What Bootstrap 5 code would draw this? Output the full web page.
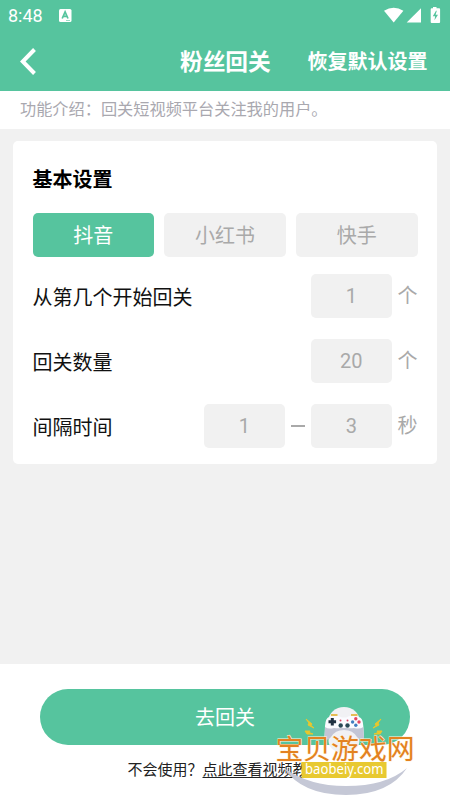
<!DOCTYPE html>
<html lang="zh-CN">
<head>
<meta charset="utf-8">
<meta name="viewport" content="width=device-width, initial-scale=1">
<title>粉丝回关</title>
<link href="https://cdn.jsdelivr.net/npm/bootstrap@5.3.0/dist/css/bootstrap.min.css" rel="stylesheet">
<style>
:root { --brand: #56c49e; --soft: #f1f1f1; --muted: #a9a9a9; }
body { font-family: Roboto, "Noto Sans CJK SC", sans-serif; font-size: 20px; line-height: 1.2; color: #111; background: var(--soft); }
.screen { width: 450px; height: 800px; }
.app-header { background: var(--brand); height: 91px; }
.status-bar { height: 31px; padding: 0 8px; font-size: 18px; }
.status-icons { margin-right: 1px; }
.title-bar { display: grid; grid-template-columns: 160px auto 1fr; height: 60px; padding: 0 22.5px 0 20px; }
.page-title { font-size: 22.7px; padding-top: 3px; }
.reset { padding-top: 2px; }
.intro { height: 38px; padding: 0 0 0 20px; font-size: 16.2px; color: #a9a8af; }
.settings { margin: 12px 13px 0 13px; height: 323px; border-radius: 5px; padding: 27px 19.5px 0 19.5px; }
.settings h2 { font-size: 20px; line-height: 24px; margin-bottom: 21px; color: #000; }
.tabs { gap: 10px; margin-bottom: 17px; }
.tabs .btn { height: 44px; padding: 2px 0 0; font-size: 20px; line-height: 1; border: 0; border-radius: 5px; color: var(--muted); background: var(--soft); }
.tabs .btn.active { color: #fff; background: var(--brand); }
.setting-row { height: 43.5px; margin-bottom: 21.5px; }
.setting-name { padding-top: 4px; }
.value { width: 81.5px; height: 43.5px; border-radius: 5px; background: var(--soft); color: var(--muted); }
.unit { width: 25.5px; padding: 1px 0 0 5.5px; color: var(--muted); }
.dash { width: 14px; height: 1.5px; margin: 0 5.7px; background: var(--muted); }
.action-bar { height: 136px; padding-top: 25px; }
.go { width: 370px; height: 56px; padding-top: 8px; color: #fff; background: var(--brand); font-size: 20px; border: 0; }
.help { margin-top: 16px; font-size: 15px; line-height: 18px; color: #222; }
.help a { color: inherit; text-underline-offset: 2px; }
.site-stamp { left: 270px; top: 700px; }
</style>
</head>
<body>
<div class="screen position-relative d-flex flex-column overflow-hidden">
  <header class="app-header text-white">
    <div class="status-bar d-flex align-items-center">
      <span>8:48</span>
      <svg class="ms-3" width="13" height="13" viewBox="0 0 13 13"><rect width="12.5" height="13" rx="1.5" fill="#fff"/><path d="M3.2 9.5 6.1 2.8 9 9.5M4.2 7.4H8" fill="none" stroke="#56c49e" stroke-width="1.7"/><path d="M7 11.5h4" stroke="#56c49e" stroke-width=".6"/></svg>
      <svg class="status-icons ms-auto" width="57" height="18" viewBox="0 .5 57 18" fill="#fff"><path d="M0 4.2Q9.7-1.5 19.4 4.2L9.7 16Z"/><path d="M22.7 16.1H37V1.8Z"/><path d="M49 .5h3.5v1.3h2.6q1 0 1 1v12.6q0 1-1 1h-7.4q-1 0-1-1V2.8q0-1 1-1H49z"/><path d="M52 4.2 48.8 9.7h2.3L50.5 13.7 54 8.3h-2.4L52.8 4.2Z" fill="#56c49e"/></svg>
    </div>
    <div class="title-bar align-items-center">
      <svg width="17" height="27" viewBox="0 1.5 17 27" fill="none" stroke="#fff" stroke-width="4"><path d="M14.5 3 2.7 15 14.5 27"/></svg>
      <div class="page-title fw-bold">粉丝回关</div>
      <div class="reset text-end fw-bold text-nowrap">恢复默认设置</div>
    </div>
  </header>

  <div class="intro bg-white d-flex align-items-center">功能介绍：回关短视频平台关注我的用户。</div>

  <main class="flex-grow-1">
    <section class="settings bg-white">
      <h2 class="fw-bold">基本设置</h2>
      <div class="tabs d-flex">
        <button class="btn active flex-fill w-100">抖音</button>
        <button class="btn flex-fill w-100">小红书</button>
        <button class="btn flex-fill w-100">快手</button>
      </div>
      <div class="setting-row d-flex align-items-center">
        <span class="setting-name me-auto">从第几个开始回关</span>
        <span class="value d-flex align-items-center justify-content-center">1</span><span class="unit">个</span>
      </div>
      <div class="setting-row d-flex align-items-center">
        <span class="setting-name me-auto">回关数量</span>
        <span class="value d-flex align-items-center justify-content-center">20</span><span class="unit">个</span>
      </div>
      <div class="setting-row d-flex align-items-center">
        <span class="setting-name me-auto">间隔时间</span>
        <span class="value d-flex align-items-center justify-content-center">1</span><span class="dash"></span><span class="value d-flex align-items-center justify-content-center">3</span><span class="unit">秒</span>
      </div>
    </section>
  </main>

  <footer class="action-bar bg-white d-flex flex-column align-items-center">
    <button class="go btn rounded-pill">去回关</button>
    <div class="help">不会使用？<a href="#">点此查看视频教程</a></div>
  </footer>

  <svg class="site-stamp position-absolute" width="150" height="100" viewBox="270 700 150 100">
    <!-- gamepad -->
    <ellipse cx="344" cy="721" rx="15.5" ry="14" fill="#f1f1f4"/>
    <ellipse cx="344" cy="741" rx="15.5" ry="12" fill="#f1f1f4"/>
    <path d="M329 717Q337 715 342 717.5H346Q351 715 359 717Q363 718 363.3 726L364 738Q360 741 357 735L353 729H335L331 735Q328 741 324.5 738L325 726Q325.500 718 329 717Z" fill="#fbfbff"/>
    <path d="M325.200 727 324.300 738Q327 742 331 737Q335 730 344 730Q353 730 357 737Q361 742 364 738L363.300 727Q360 729.500 354 728Q350 728.500 347 728H341Q338 728.500 334 728Q328 729.500 325.200 727Z" fill="#c3c5d5"/>
    <path d="M331 715h6.500M351 715h6.500" stroke="#e5bd55" stroke-width="1.8"/>
    <path d="M332.300 718v7.600M328.500 721.800h7.600" stroke="#203142" stroke-width="3"/>
    <circle cx="340.7" cy="725.5" r="2.2" fill="#294956"/><circle cx="347.5" cy="725.5" r="2.2" fill="#294956"/>
    <circle cx="340.5" cy="720.5" r="1" fill="#d84764"/><circle cx="347.5" cy="720.5" r="1" fill="#d84764"/>
    <circle cx="355.8" cy="718.8" r="1.7" fill="#e64562"/><circle cx="352.600" cy="722" r="1.7" fill="#417ec0"/><circle cx="359" cy="722" r="1.7" fill="#e64562"/><circle cx="355.8" cy="725.2" r="1.7" fill="#417ec0"/>
    <path d="M306 719 312 724 311 725.5 314 728 308 725 309 723ZM381 719 375 724 376 725.5 373 728 379 725 378 723ZM305 731 310 731 309 732.5 313 734 307 734ZM382 731 377 731 378 732.5 374 734 380 734Z" fill="#e8c72d" stroke="#e8c72d"/>
    <!-- smile -->
    <path d="M284 768Q302 795 346 795Q389 795 407 768Q386 786 346 786Q309 786 284 768Z" fill="#c5c8d6"/>
    <text x="275.5" y="759" font-family="Noto Sans CJK SC, sans-serif" font-size="27.8" font-weight="400" fill="#e38220" stroke="#fff3dc" stroke-width="1" paint-order="stroke" textLength="139">宝贝游戏网</text>
    <rect x="301.5" y="762" width="85" height="16" fill="#e8c931"/>
    <text x="305" y="774" font-family="Noto Sans, sans-serif" font-size="13.5" fill="#fff" textLength="78.5" lengthAdjust="spacingAndGlyphs">baobeiy.com</text>
  </svg>
</div>
<script src="https://cdn.jsdelivr.net/npm/bootstrap@5.3.0/dist/js/bootstrap.bundle.min.js"></script>
</body>
</html>
